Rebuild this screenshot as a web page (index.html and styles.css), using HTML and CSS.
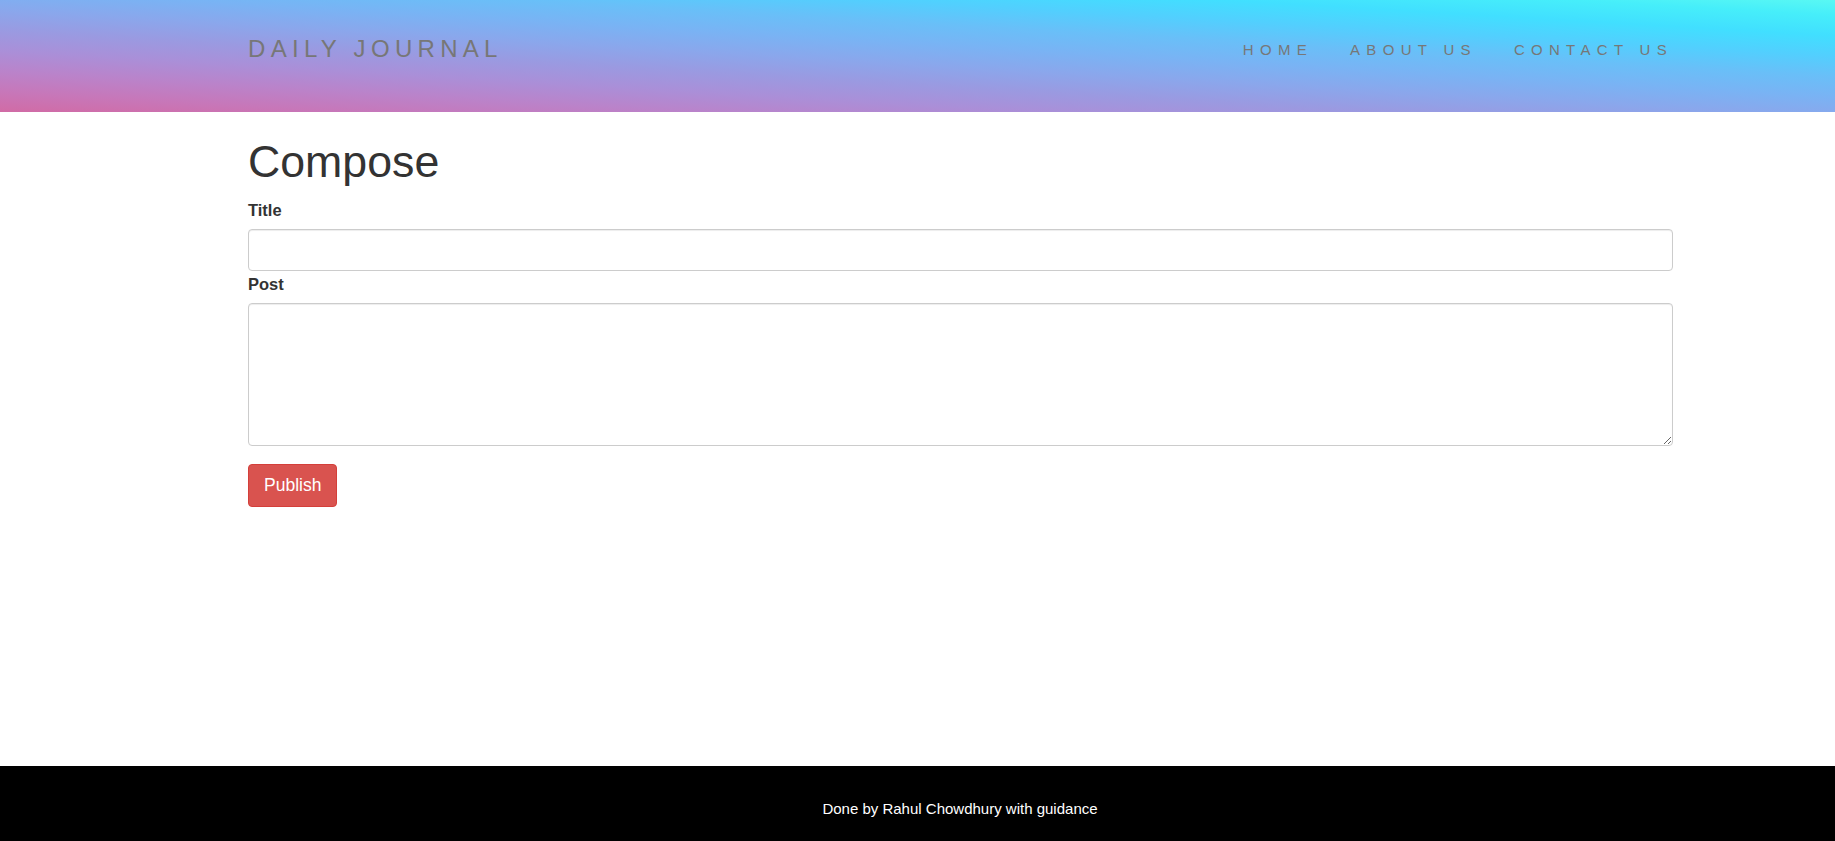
FILE: index.html
```html
<!DOCTYPE html>
<html lang="en">
<head>
<meta charset="utf-8">
<title>Daily Journal</title>
<link rel="stylesheet" href="styles.css">
</head>
<body>
<div class="page">
  <header class="topbar">
    <div class="container topbar-inner">
      <a class="brand" href="#">DAILY JOURNAL</a>
      <nav class="nav">
        <a class="nav-link" href="#">HOME</a>
        <a class="nav-link" href="#">ABOUT US</a>
        <a class="nav-link" href="#">CONTACT US</a>
      </nav>
    </div>
  </header>
  <main class="container content">
    <h1 class="title">Compose</h1>
    <form class="compose-form">
      <label class="field-label" for="postTitle">Title</label>
      <input class="field-input" id="postTitle" type="text">
      <label class="field-label field-label-post" for="postBody">Post</label>
      <textarea class="field-input field-area" id="postBody"></textarea>
      <button class="btn-publish" type="button">Publish</button>
    </form>
  </main>
  <footer class="footer">
    <p class="footer-text">Done by Rahul Chowdhury with guidance</p>
  </footer>
</div>
</body>
</html>
```
FILE: styles.css
```css
html, body {
  margin: 0;
  padding: 0;
}
body {
  font-family: "Liberation Sans", Arial, sans-serif;
  color: #333;
  background: #fff;
}
.page {
  min-height: 100vh;
  display: flex;
  flex-direction: column;
}
.container {
  width: 1425px;
  margin-left: 248px;
}
.topbar {
  height: 112px;
  background-image: linear-gradient(to top right, #d16ba5, #c777b9, #ba83ca, #aa8fd8, #9a9ae1, #8aa7ec, #79b3f4, #69bff8, #52cffe, #41dfff, #46eefa, #5ffbf1);
  background-size: 1920px 100%;
  background-repeat: no-repeat;
}
.topbar-inner {
  display: flex;
  justify-content: space-between;
  align-items: flex-start;
  padding-top: 37px;
}
.brand {
  font-size: 24px;
  line-height: 24px;
  letter-spacing: 5.3px;
  color: #777;
  text-decoration: none;
}
.nav {
  display: flex;
  gap: 37px;
  margin-top: 5px;
}
.nav-link {
  font-size: 15px;
  line-height: 15px;
  letter-spacing: 6.3px;
  color: #777;
  text-decoration: none;
}
.content {
  flex: 1;
}
.title {
  font-size: 44.7px;
  line-height: 48px;
  font-weight: normal;
  margin: 26px 0 14px;
  color: #333;
}
.compose-form {
  display: flex;
  flex-direction: column;
  align-items: flex-start;
}
.field-label {
  display: block;
  font-size: 16.5px;
  line-height: 20px;
  font-weight: bold;
  margin-bottom: 9px;
}
.field-label-post {
  margin-top: 3px;
}
.field-input {
  box-sizing: border-box;
  width: 1425px;
  height: 42px;
  border: 1px solid #ccc;
  border-radius: 4px;
  box-shadow: inset 0 1px 1px rgba(0, 0, 0, 0.075);
  font-family: "Liberation Sans", Arial, sans-serif;
  font-size: 14px;
  padding: 6px 12px;
  margin: 0;
  background: #fff;
}
.field-area {
  height: 143px;
}
.btn-publish {
  margin-top: 18px;
  background: #d9534f;
  border: 1px solid #d43f3a;
  border-radius: 4px;
  color: #fff;
  font-family: "Liberation Sans", Arial, sans-serif;
  font-size: 17.5px;
  line-height: 23px;
  padding: 9px 15px;
}
.footer {
  height: 75px;
  box-sizing: border-box;
  background: #000;
  color: #fff;
  padding-top: 34px;
  padding-left: 85px;
  text-align: center;
}
.footer-text {
  margin: 0;
  font-size: 15px;
  line-height: 17px;
}
```
